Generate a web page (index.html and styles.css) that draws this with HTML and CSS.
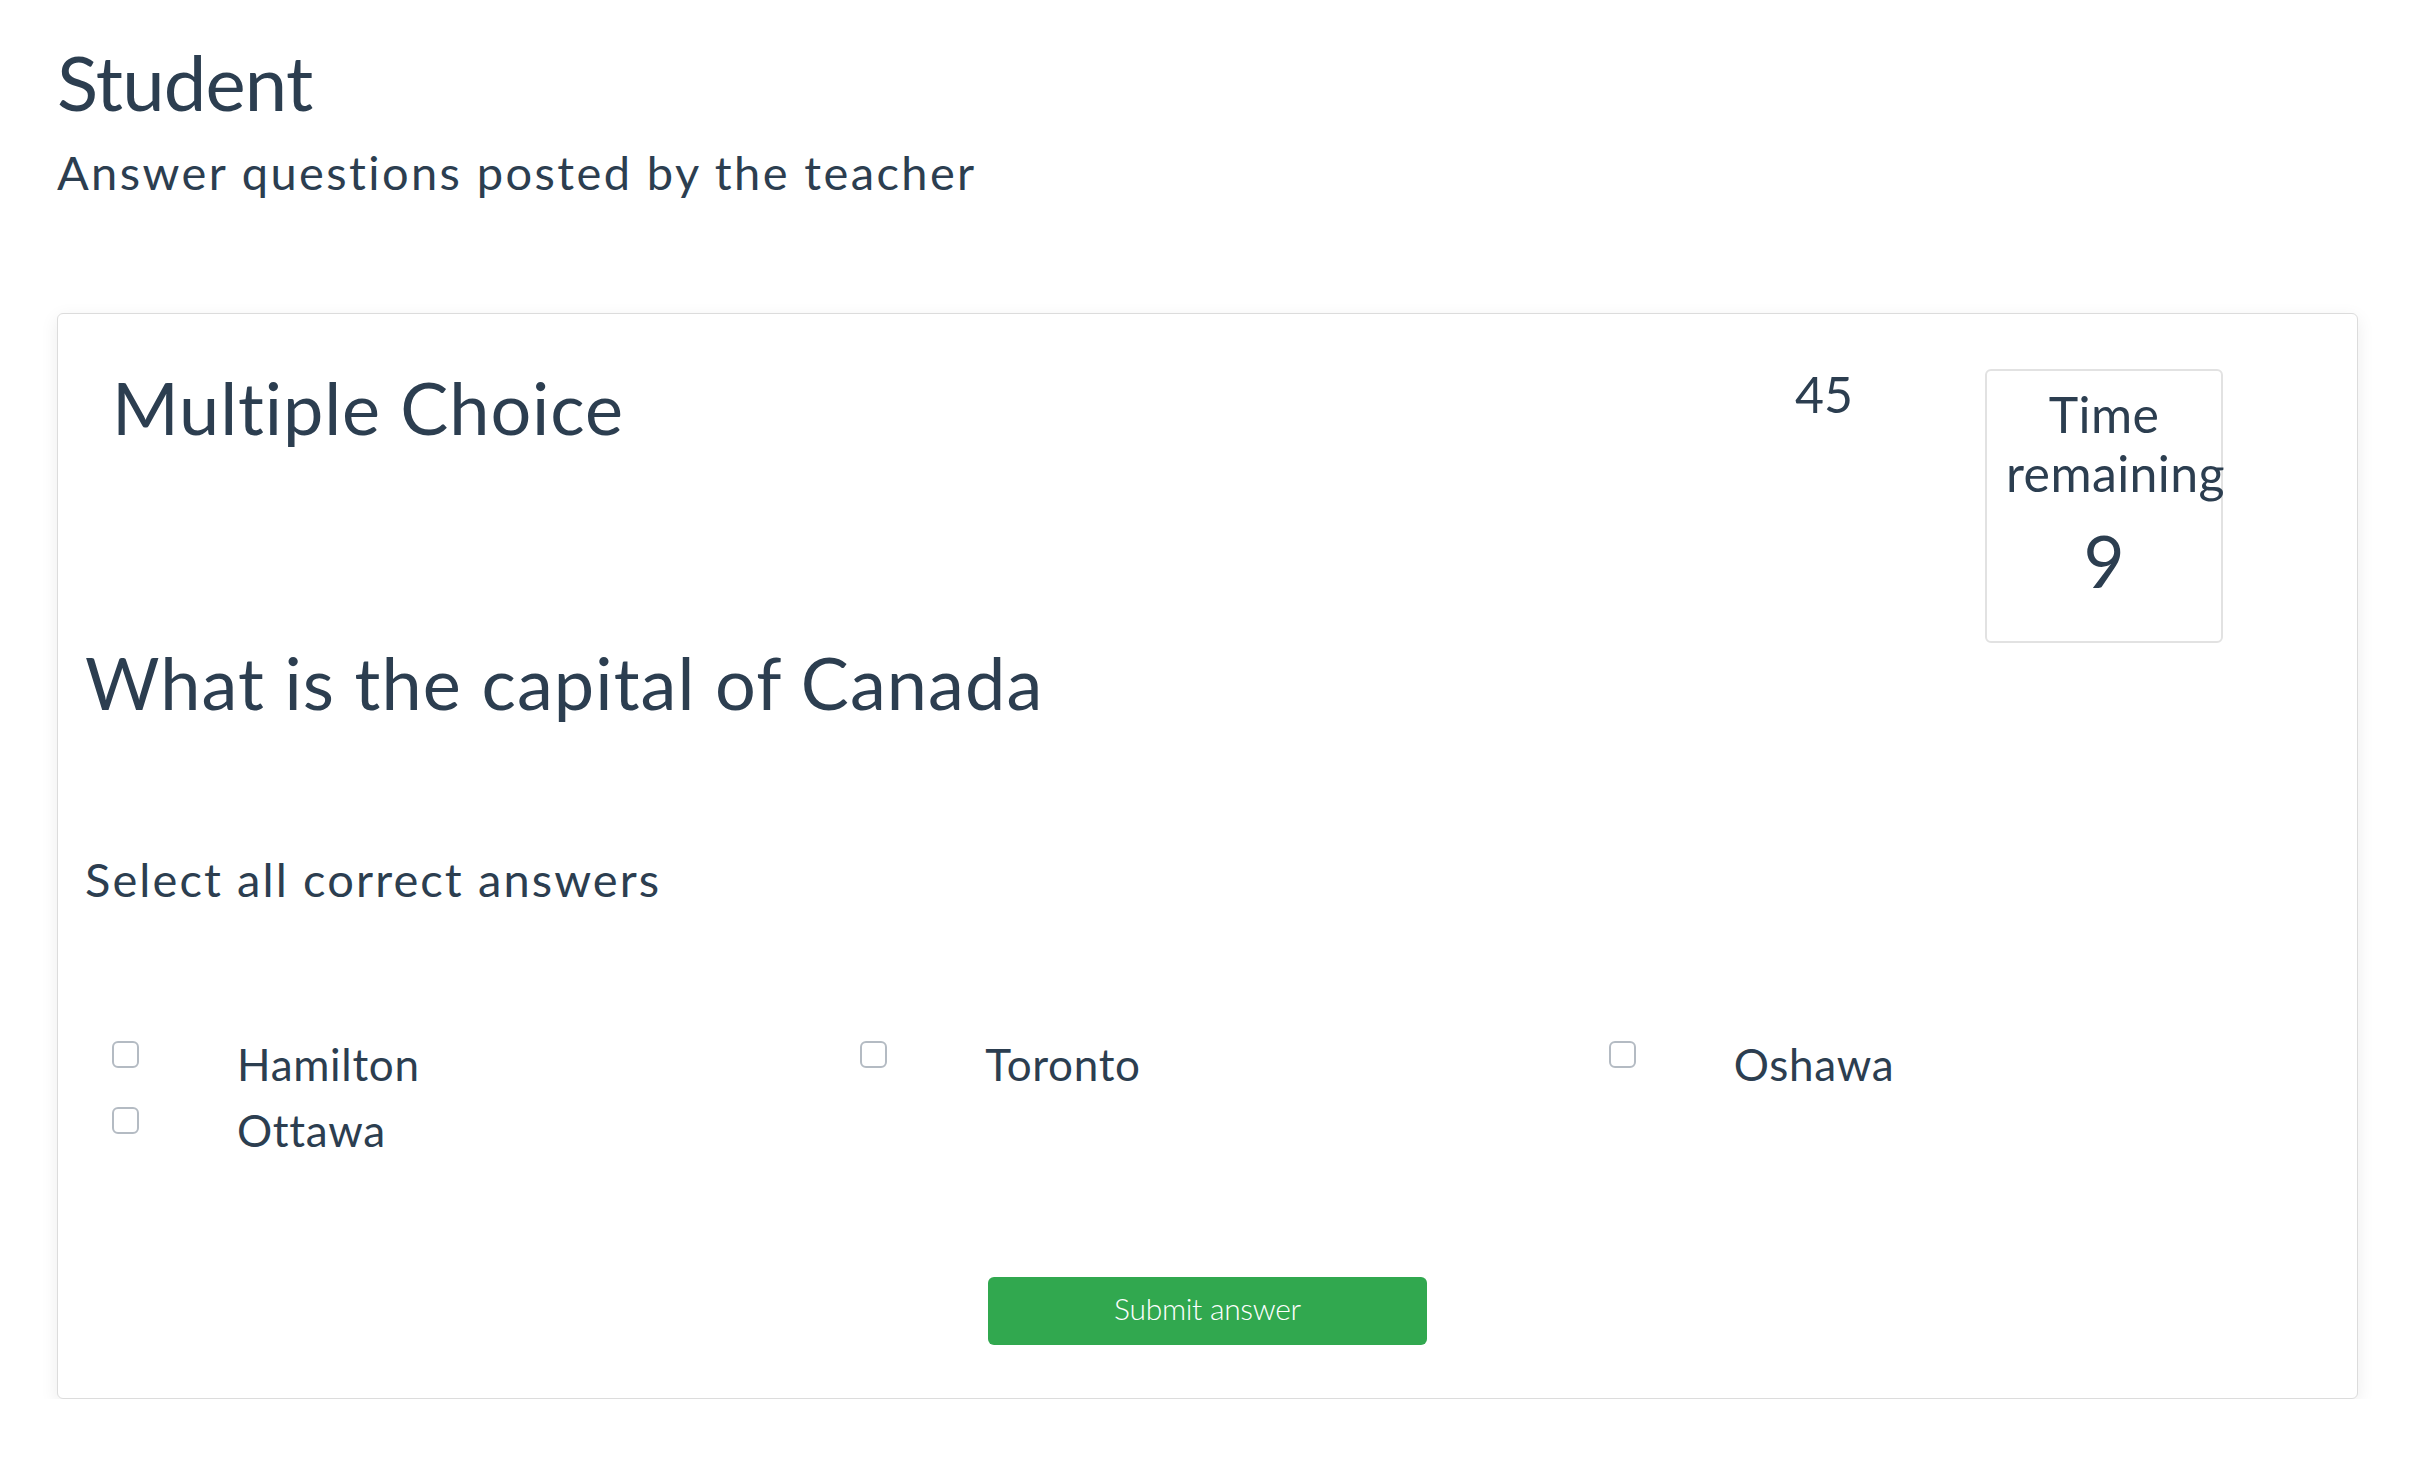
FILE: index.html
```html
<!DOCTYPE html>
<html lang="en">
<head>
<meta charset="utf-8">
<title>Student</title>
<link rel="stylesheet" href="styles.css">
</head>
<body>
<div class="page">
  <h1 class="page-title">Student</h1>
  <p class="page-subtitle">Answer questions posted by the teacher</p>

  <div class="card">
    <div class="card-header">
      <h2 class="q-type">Multiple Choice</h2>
      <div class="q-points">45</div>
      <div class="timer">
        <div class="timer-label">Time remaining</div>
        <div class="timer-value">9</div>
      </div>
    </div>

    <h3 class="question">What is the capital of Canada</h3>
    <p class="instruction">Select all correct answers</p>

    <div class="options">
      <label class="option"><input type="checkbox" class="box"><span class="option-text">Hamilton</span></label>
      <label class="option"><input type="checkbox" class="box"><span class="option-text">Toronto</span></label>
      <label class="option"><input type="checkbox" class="box"><span class="option-text">Oshawa</span></label>
      <label class="option"><input type="checkbox" class="box"><span class="option-text">Ottawa</span></label>
    </div>

    <div class="actions">
      <button class="submit" type="button">Submit answer</button>
    </div>
  </div>
</div>
</body>
</html>
```
FILE: styles.css
```css
* { box-sizing: border-box; }

html, body {
  margin: 0;
  padding: 0;
  background: #ffffff;
}

body {
  font-family: Lato, "Open Sans", "Noto Sans", sans-serif;
  color: #2c3e50;
  font-variant-ligatures: none;
  font-feature-settings: "liga" 0, "clig" 0;
}

.page {
  padding: 0 60px 0 57px;
}

.page-title {
  margin: 36px 0 0;
  font-size: 76px;
  font-weight: 400;
  line-height: 1.2;
  letter-spacing: -0.8px;
}

.page-subtitle {
  margin: 17px 0 0;
  font-size: 47px;
  font-weight: 400;
  line-height: 1.2;
  letter-spacing: 2.4px;
}

.card {
  margin-top: 112px;
  border: 1px solid #dcdcdc;
  border-radius: 6px;
  box-shadow: 0 5px 18px rgba(0, 0, 0, 0.08);
  background: #fff;
  padding: 50px 27px 53px;
}

.card-header {
  display: grid;
  grid-template-columns: 1fr 190px 238px;
  align-items: start;
  margin: 0 107px 0 27px;
}

.q-type {
  margin: 0;
  font-size: 72px;
  font-weight: 400;
  line-height: 1.2;
  letter-spacing: 0.9px;
}

.q-points {
  font-size: 50px;
  line-height: 60px;
}

.timer {
  margin-top: 5px;
  height: 274px;
  border: 2px solid #e2e2e2;
  border-radius: 6px;
  padding: 14px 19px 0;
  text-align: center;
}

.timer-label {
  font-size: 50px;
  line-height: 59px;
  letter-spacing: 0.4px;
}

.timer-value {
  margin-top: 15px;
  font-size: 71px;
  line-height: 1.2;
}

.question {
  margin: 0;
  font-size: 72px;
  font-weight: 400;
  line-height: 1.1;
  letter-spacing: 1.1px;
}

.instruction {
  margin: 129px 0 0;
  font-size: 47px;
  line-height: 1.2;
  letter-spacing: 2.1px;
}

.options {
  margin-top: 124px;
  display: grid;
  grid-template-columns: repeat(3, 1fr);
}

.option {
  display: flex;
  align-items: flex-start;
  height: 66px;
}

.box {
  appearance: none;
  -webkit-appearance: none;
  margin: 10px 0 0 27px;
  width: 27px;
  height: 27px;
  border: 2px solid #b4bbc3;
  border-radius: 6px;
  background: #fff;
  flex: none;
}

.option-text {
  margin-left: 98px;
  font-size: 44px;
  line-height: 66px;
  letter-spacing: 0.7px;
}

.actions {
  margin-top: 114px;
  display: flex;
  justify-content: center;
}

.submit {
  width: 439px;
  height: 68px;
  padding: 0 0 6px;
  border: none;
  border-radius: 6px;
  background: #31a84f;
  color: #ffffff;
  font-family: Lato, "Open Sans", sans-serif;
  font-size: 30px;
  font-weight: 300;
  line-height: 62px;
  letter-spacing: -0.3px;
}
```
